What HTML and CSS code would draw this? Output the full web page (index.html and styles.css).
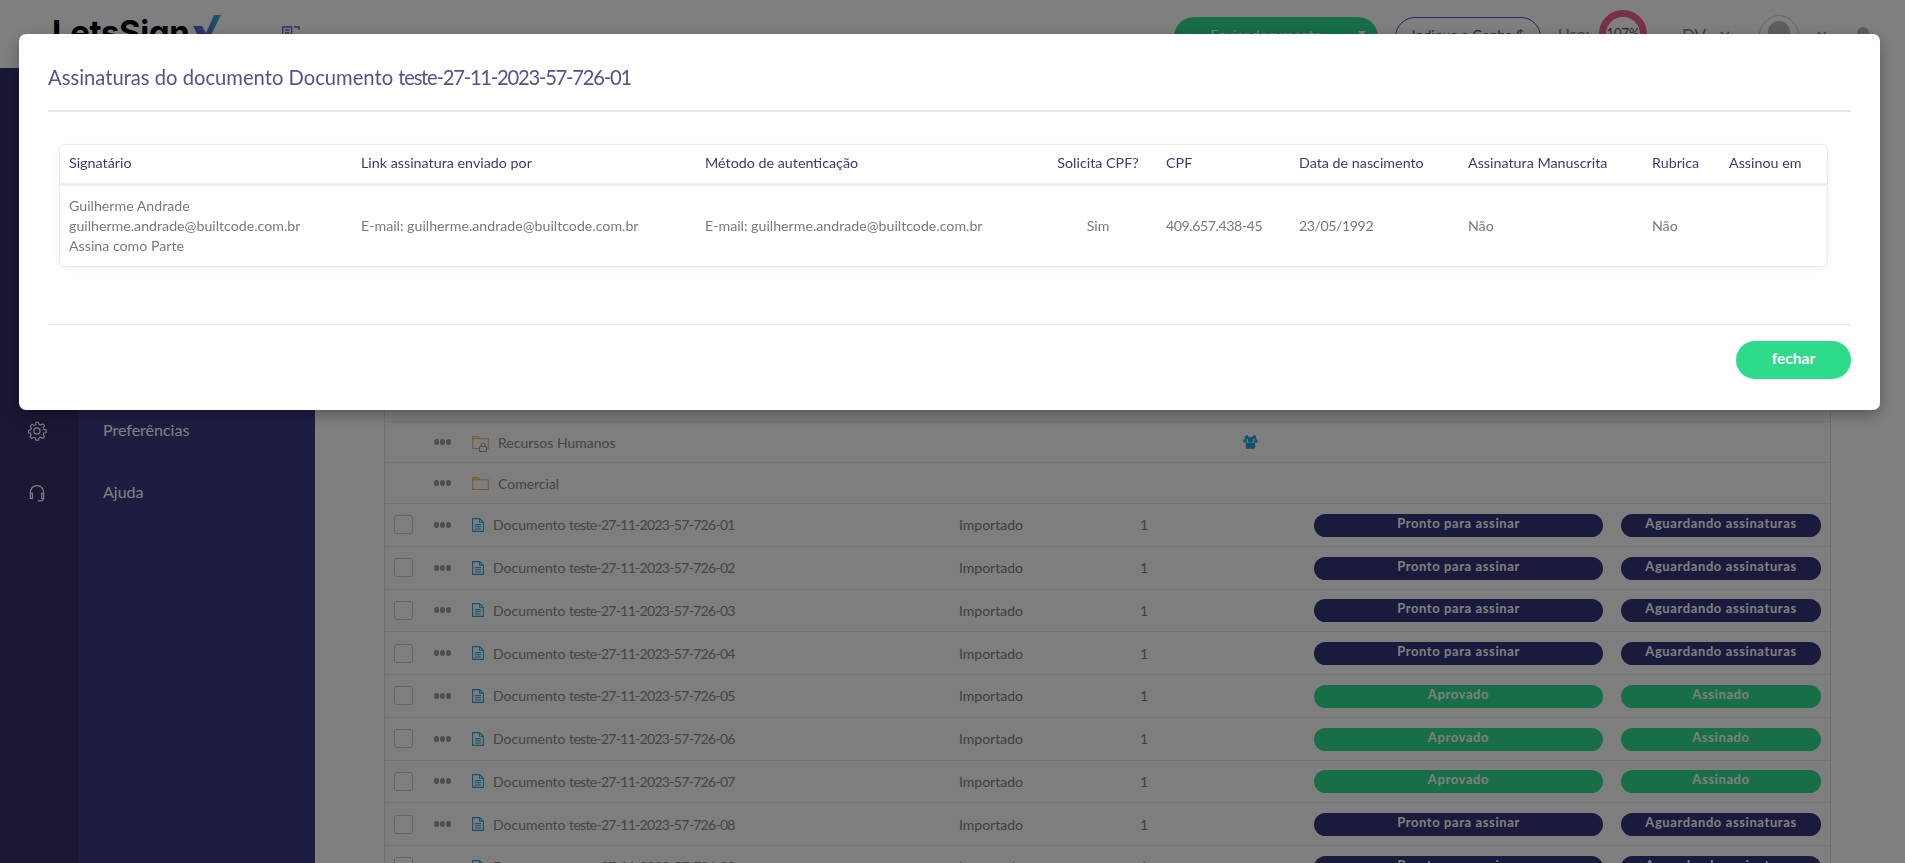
FILE: index.html
```html
<!DOCTYPE html>
<html lang="pt-BR">
<head>
<meta charset="utf-8">
<title>LetsSign</title>
<link rel="stylesheet" href="styles.css">
</head>
<body>
<svg class="defs" width="0" height="0" aria-hidden="true">
  <defs>
    <linearGradient id="checkGrad" x1="1" y1="0" x2="0" y2="1">
      <stop offset="0" stop-color="#2bc0c8"/>
      <stop offset="1" stop-color="#6a3fd0"/>
    </linearGradient>
    <symbol id="file" viewBox="0 0 12 14">
      <path d="M.6.6h7l3.800 3.600v9.200H.6zM7.600.6v3.600h3.800M3 6.600h6M3 8.800h6M3 11h6" fill="none" stroke="currentColor" stroke-width="1.100"/>
    </symbol>
    <symbol id="folder" viewBox="0 0 18 14">
      <path d="M.6 13.400V.8h6l1.600 2.200h9.200v10.400zM.6 3h7.600" fill="none" stroke="currentColor" stroke-width="1.100"/>
    </symbol>
    <symbol id="people" viewBox="0 0 16 15">
      <circle cx="4" cy="2.400" r="2.200"/><circle cx="12" cy="2.400" r="2.200"/>
      <circle cx="8" cy="5" r="2.800"/><circle cx="2.200" cy="6.400" r="2"/><circle cx="13.800" cy="6.400" r="2"/>
      <path d="M3 9.600c0-1 1-1.600 2-1.600h6c1 0 2 .6 2 1.600v4c0 .7-.5 1.200-1.200 1.200H4.200c-.7 0-1.200-.5-1.200-1.200z"/>
    </symbol>
  </defs>
</svg>

<div class="page">
  <header class="topbar">
    <div class="logo"><span class="logo-text">LetsSign</span>
      <svg class="logo-check" viewBox="0 0 28 26"><path d="M0 11h9l4 7L21 0h7L15 26H8z" fill="url(#checkGrad)"/></svg>
    </div>
    <svg class="menu-icon" viewBox="0 0 18 14"><path d="M.7 13V1h9v12zM3 4h4.500M3 7h4.500M3 10h4.500M12 1h5v3M17 9v4h-4" fill="none" stroke="currentColor" stroke-width="1.300"/></svg>
    <div class="top-actions">
      <button class="send-btn">Enviar documento<span class="caret"></span></button>
      <button class="refer-btn">Indique e Ganhe $</button>
      <span class="usage-label">Uso:</span>
      <div class="usage-ring">107%</div>
      <span class="lang">DV</span>
      <svg class="chev chev-lang" viewBox="0 0 10 6"><path d="M1 1l4 4 4-4" fill="none" stroke="currentColor" stroke-width="1.300"/></svg>
      <div class="avatar"><span class="avatar-head"></span></div>
      <svg class="chev chev-user" viewBox="0 0 10 6"><path d="M1 1l4 4 4-4" fill="none" stroke="currentColor" stroke-width="1.300"/></svg>
      <span class="bell"></span>
    </div>
  </header>

  <div class="main">
    <aside class="sidebar">
      <div class="rail">
        <svg class="rail-icon" viewBox="0 0 24 24"><path d="M10.300 2h3.400l.7 2.800 2.200.9 2.500-1.500 2.400 2.400-1.500 2.500.9 2.200 2.800.7v3.400l-2.800.7-.9 2.200 1.500 2.500-2.400 2.400-2.500-1.500-2.200.9-.7 2.800h-3.400l-.7-2.800-2.200-.9-2.500 1.500-2.400-2.400 1.500-2.500-.9-2.200L.8 16v-3.400l2.800-.7.900-2.200L3 7.200l2.400-2.400 2.500 1.500 2.200-.9z" transform="translate(1.200 -.4) scale(.92)" fill="none" stroke="currentColor" stroke-width="1.400"/><circle cx="12" cy="12" r="3.700" fill="none" stroke="currentColor" stroke-width="1.400"/></svg>
        <svg class="rail-icon" viewBox="0 0 24 24"><path d="M4 15v-4a8 8 0 0 1 16 0v4M4 12.500h2.500v6H4zM17.500 12.500H20v6h-2.500zM20 18.500c0 2-2 3-5 3h-2" fill="none" stroke="currentColor" stroke-width="1.500"/></svg>
      </div>
      <nav class="menu">
        <a class="menu-item">Preferências</a>
        <a class="menu-item">Ajuda</a>
      </nav>
    </aside>

    <section class="content">
      <div class="list">
        <div class="row folder-row first-row"><span></span><span class="dots"></span><span class="name"><svg class="folder-icon"><use href="#folder"/></svg></span></div>
        <div class="row folder-row">
          <span></span><span class="dots"><i></i><i></i><i></i></span>
          <span class="name"><svg class="folder-icon"><use href="#folder"/></svg><svg class="lock" viewBox="0 0 8 10"><path d="M.5 4.500h7v5h-7zM2 4.500V3a2 2 0 0 1 4 0v1.500" fill="#fbfdfa" stroke="#999"/></svg><span class="folder-name">Recursos Humanos</span></span>
          <span></span><span></span><svg class="people"><use href="#people"/></svg>
        </div>
        <div class="row folder-row">
          <span></span><span class="dots"><i></i><i></i><i></i></span>
          <span class="name"><svg class="folder-icon"><use href="#folder"/></svg><span class="folder-name">Comercial</span></span>
        </div>
        <div class="row"><span class="check"></span><span class="dots"><i></i><i></i><i></i></span><span class="name"><svg class="file-icon"><use href="#file"/></svg>Documento&nbsp;<span class="tight">teste-27-11-2023-57-726-01</span></span><span>Importado</span><span>1</span><span></span><span></span><span class="badge dark">Pronto para assinar</span><span class="badge dark second">Aguardando assinaturas</span></div>
        <div class="row"><span class="check"></span><span class="dots"><i></i><i></i><i></i></span><span class="name"><svg class="file-icon"><use href="#file"/></svg>Documento&nbsp;<span class="tight">teste-27-11-2023-57-726-02</span></span><span>Importado</span><span>1</span><span></span><span></span><span class="badge dark">Pronto para assinar</span><span class="badge dark second">Aguardando assinaturas</span></div>
        <div class="row"><span class="check"></span><span class="dots"><i></i><i></i><i></i></span><span class="name"><svg class="file-icon"><use href="#file"/></svg>Documento&nbsp;<span class="tight">teste-27-11-2023-57-726-03</span></span><span>Importado</span><span>1</span><span></span><span></span><span class="badge dark">Pronto para assinar</span><span class="badge dark second">Aguardando assinaturas</span></div>
        <div class="row"><span class="check"></span><span class="dots"><i></i><i></i><i></i></span><span class="name"><svg class="file-icon"><use href="#file"/></svg>Documento&nbsp;<span class="tight">teste-27-11-2023-57-726-04</span></span><span>Importado</span><span>1</span><span></span><span></span><span class="badge dark">Pronto para assinar</span><span class="badge dark second">Aguardando assinaturas</span></div>
        <div class="row"><span class="check"></span><span class="dots"><i></i><i></i><i></i></span><span class="name"><svg class="file-icon"><use href="#file"/></svg>Documento&nbsp;<span class="tight">teste-27-11-2023-57-726-05</span></span><span>Importado</span><span>1</span><span></span><span></span><span class="badge green">Aprovado</span><span class="badge green second">Assinado</span></div>
        <div class="row"><span class="check"></span><span class="dots"><i></i><i></i><i></i></span><span class="name"><svg class="file-icon"><use href="#file"/></svg>Documento&nbsp;<span class="tight">teste-27-11-2023-57-726-06</span></span><span>Importado</span><span>1</span><span></span><span></span><span class="badge green">Aprovado</span><span class="badge green second">Assinado</span></div>
        <div class="row"><span class="check"></span><span class="dots"><i></i><i></i><i></i></span><span class="name"><svg class="file-icon"><use href="#file"/></svg>Documento&nbsp;<span class="tight">teste-27-11-2023-57-726-07</span></span><span>Importado</span><span>1</span><span></span><span></span><span class="badge green">Aprovado</span><span class="badge green second">Assinado</span></div>
        <div class="row"><span class="check"></span><span class="dots"><i></i><i></i><i></i></span><span class="name"><svg class="file-icon"><use href="#file"/></svg>Documento&nbsp;<span class="tight">teste-27-11-2023-57-726-08</span></span><span>Importado</span><span>1</span><span></span><span></span><span class="badge dark">Pronto para assinar</span><span class="badge dark second">Aguardando assinaturas</span></div>
        <div class="row"><span class="check"></span><span class="dots"><i></i><i></i><i></i></span><span class="name"><svg class="file-icon"><use href="#file"/></svg>Documento&nbsp;<span class="tight">teste-27-11-2023-57-726-09</span></span><span>Importado</span><span>1</span><span></span><span></span><span class="badge dark">Pronto para assinar</span><span class="badge dark second">Aguardando assinaturas</span></div>
      </div>
    </section>
  </div>
</div>

<div class="backdrop"></div>

<div class="modal" role="dialog">
  <h1 class="modal-title">Assinaturas do documento Documento <span class="title-tight">teste-27-11-2023-57-726-01</span></h1>
  <div class="modal-body">
    <div class="card">
      <table class="sign-table">
        <colgroup>
          <col class="c1"><col class="c2"><col class="c3"><col class="c4"><col class="c5"><col class="c6"><col class="c7"><col class="c8"><col class="c9">
        </colgroup>
        <thead>
          <tr>
            <th>Signatário</th><th>Link assinatura enviado por</th><th>Método de autenticação</th><th class="center">Solicita CPF?</th><th>CPF</th><th>Data de nascimento</th><th>Assinatura Manuscrita</th><th>Rubrica</th><th>Assinou em</th>
          </tr>
        </thead>
        <tbody>
          <tr>
            <td><div>Guilherme Andrade</div><div>guilherme.andrade@builtcode.com.br</div><div>Assina como Parte</div></td>
            <td>E-mail: guilherme.andrade@builtcode.com.br</td>
            <td>E-mail: guilherme.andrade@builtcode.com.br</td>
            <td class="center">Sim</td>
            <td><span class="num">409.657.438-45</span></td>
            <td><span class="num">23/05/1992</span></td>
            <td>Não</td>
            <td>Não</td>
            <td></td>
          </tr>
        </tbody>
      </table>
    </div>
  </div>
  <div class="modal-footer">
    <button class="close-btn">fechar</button>
  </div>
</div>
</body>
</html>
```
FILE: styles.css
```css
* { box-sizing: border-box; }
html, body { margin: 0; height: 100%; }
body {
  height: 863px;
  overflow: hidden;
  background: #fff;
  font-family: "Lato", "Open Sans", sans-serif;
  font-size: 14px;
  color: #808080;
}
.defs { position: absolute; }
.page { display: flex; flex-direction: column; height: 863px; }

/* top bar */
.topbar {
  height: 68px;
  flex: none;
  display: flex;
  background: #fff;
  overflow: hidden;
  padding: 0 0 0 52px;
}
.logo { display: flex; width: 230px; align-items: flex-start; }
.logo-text {
  font-family: "Inter", sans-serif;
  font-weight: 700;
  font-size: 33px;
  line-height: 1;
  margin-top: 16px;
  color: #000;
  letter-spacing: -.4px;
}
.logo-check { width: 28px; height: 26px; margin: 15px 0 0 4px; flex: none; }
.menu-icon { width: 18px; height: 14px; margin-top: 26px; color: #7d4bd0; flex: none; }
.top-actions { flex: 1; display: flex; align-items: flex-start; padding-left: 874px; }
.send-btn {
  width: 204px;
  height: 40px;
  margin-top: 17px;
  border: 0;
  border-radius: 20px;
  background: #2edb8b;
  color: #fff;
  font: 14px "Lato", sans-serif;
  position: relative;
  padding: 0 20px 6px 0;
}
.caret {
  position: absolute;
  right: 12px;
  top: 14px;
  border: 4px solid transparent;
  border-top: 5px solid #fff;
}
.refer-btn {
  width: 146px;
  height: 40px;
  margin: 17px 0 0 17px;
  border: 1px solid #6a3fc8;
  border-radius: 20px;
  background: #fff;
  color: #6a3fc8;
  font: 14px "Lato", sans-serif;
  padding: 0 0 6px;
}
.usage-label { margin: 24px 0 0 17px; width: 41px; font-size: 16px; }
.usage-ring {
  width: 48px;
  height: 48px;
  margin-top: 10px;
  border: 7px solid #f0608f;
  border-radius: 50%;
  color: #555;
  font-size: 13px;
  line-height: 32px;
  text-align: center;
}
.lang { margin: 25px 0 0 35px; font-size: 17px; width: 38px; }
.chev { width: 10px; height: 6px; color: #777; margin-top: 31px; flex: none; }
.avatar {
  width: 42px;
  height: 50px;
  margin: 15px 0 0 28px;
  border: 1px solid #ccc;
  border-radius: 50%;
  display: flex;
  justify-content: center;
  flex: none;
}
.avatar-head { width: 22px; height: 40px; margin-top: 5px; background: #bbb; border-radius: 11px; }
.chev-user { margin-left: 17px; }
.bell { width: 12px; height: 20px; margin: 27px 0 0 30px; background: #bbb; border-radius: 6px; }

/* sidebar */
.main { flex: 1; display: flex; min-height: 0; }
.sidebar { width: 315px; flex: none; display: flex; background: #3a3b84; }
.rail {
  width: 79px;
  background: #30306a;
  display: flex;
  flex-direction: column;
  align-items: center;
  padding: 353px 0 0;
  gap: 42px;
  color: #fff;
}
.rail-icon { width: 20px; height: 20px; margin-left: -5px; }
.menu { display: flex; flex-direction: column; padding: 350px 0 0 24px; gap: 38px; }
.menu-item { height: 24px; line-height: 24px; color: #fff; font-size: 16px; }

/* list */
.content { flex: 1; padding: 313px 74px 0 69px; overflow: hidden; }
.list { border-left: 1px solid #dfe3df; border-right: 1px solid #dfe3df; background: #fbfdfa; }
.row {
  display: grid;
  grid-template-columns: 49px 38px 487px 181px 103px 18px 53px 289px 227px;
  align-items: center;
  height: 42.75px;
  border-bottom: 1px solid #e4e7e4;
  white-space: nowrap;
}
.folder-row { height: 41px; }
.first-row { overflow: hidden; }
.check {
  width: 19px;
  height: 19px;
  margin-left: 9px;
  border: 1px solid #c6c6c6;
  border-radius: 3px;
  background: #fff;
}
.dots { display: flex; gap: 1.500px; }
.dots i { width: 4.500px; height: 6px; border-radius: 50%; background: #9c9c9c; }
.name { display: flex; align-items: center; position: relative; color: #8a8a8a; }
.tight { letter-spacing: -.7px; }
.file-icon { width: 12px; height: 14px; margin-right: 9px; color: #2ba5d8; flex: none; }
.folder-icon { width: 17px; height: 13px; color: #f2b63c; flex: none; }
.folder-name { margin-left: 9px; }
.lock {
  position: absolute;
  left: 7px;
  top: 50%;
  width: 8px;
  height: 10px;
}
.people { width: 15px; height: 14px; fill: #1aa6d8; }
.badge {
  height: 23px;
  margin-top: 1px;
  border-radius: 12px;
  color: #fff;
  text-align: center;
  font-size: 13px;
  font-weight: 700;
  letter-spacing: .6px;
  line-height: 19px;
}
.dark { background: #34347a; }
.green { background: #30dc8f; }
.second { margin: 1px 9px 0 18px; }

/* overlay + modal */
.backdrop { position: fixed; inset: 0; background: rgba(0, 0, 0, .5); }
.modal {
  position: fixed;
  left: 19px;
  top: 34px;
  width: 1861px;
  height: 376px;
  background: #fff;
  border-radius: 7px;
  box-shadow: 0 5px 15px rgba(0, 0, 0, .3);
  padding: 0 29px;
  display: flex;
  flex-direction: column;
}
.modal-title {
  height: 78px;
  margin: 0;
  border-bottom: 2px solid #e6e6e6;
  font-size: 20.2px;
  font-weight: 400;
  line-height: 86px;
  color: #55528c;
}
.title-tight { letter-spacing: -1.25px; }
.modal-body { height: 213px; padding: 32px 23px 0 11px; border-bottom: 1px solid #e6e6e6; }
.card {
  height: 123px;
  border: 1px solid #ececec;
  border-radius: 6px;
  box-shadow: 0 2px 6px rgba(0, 0, 0, .06);
  overflow: hidden;
}
.sign-table { width: 100%; table-layout: fixed; border-collapse: collapse; }
.c1 { width: 291px; } .c2 { width: 344px; } .c3 { width: 345px; } .c4 { width: 116px; } .c5 { width: 133px; }
.c6 { width: 169px; } .c7 { width: 184px; } .c8 { width: 77px; } .c9 { width: 108px; }
th {
  height: 39px;
  padding: 0 10px 2px;
  border-bottom: 3px solid #eceef1;
  text-align: left;
  font-size: 14.3px;
  font-weight: 400;
  color: #3c3a72;
  white-space: nowrap;
}
th:first-child, td:first-child { padding-left: 9px; }
td { height: 80px; padding: 3px 10px 0; font-size: 14.2px; color: #7a7a7a; line-height: 20px; white-space: nowrap; }
.num { letter-spacing: -.45px; }
.center { text-align: center; }
.modal-footer { display: flex; justify-content: flex-end; padding-top: 16px; }
.close-btn {
  width: 115px;
  height: 38px;
  border: 0;
  border-radius: 19px;
  background: #2edb8b;
  color: #fff;
  font: 700 15.5px "Lato", sans-serif;
  padding: 0 0 4px;
}
```
